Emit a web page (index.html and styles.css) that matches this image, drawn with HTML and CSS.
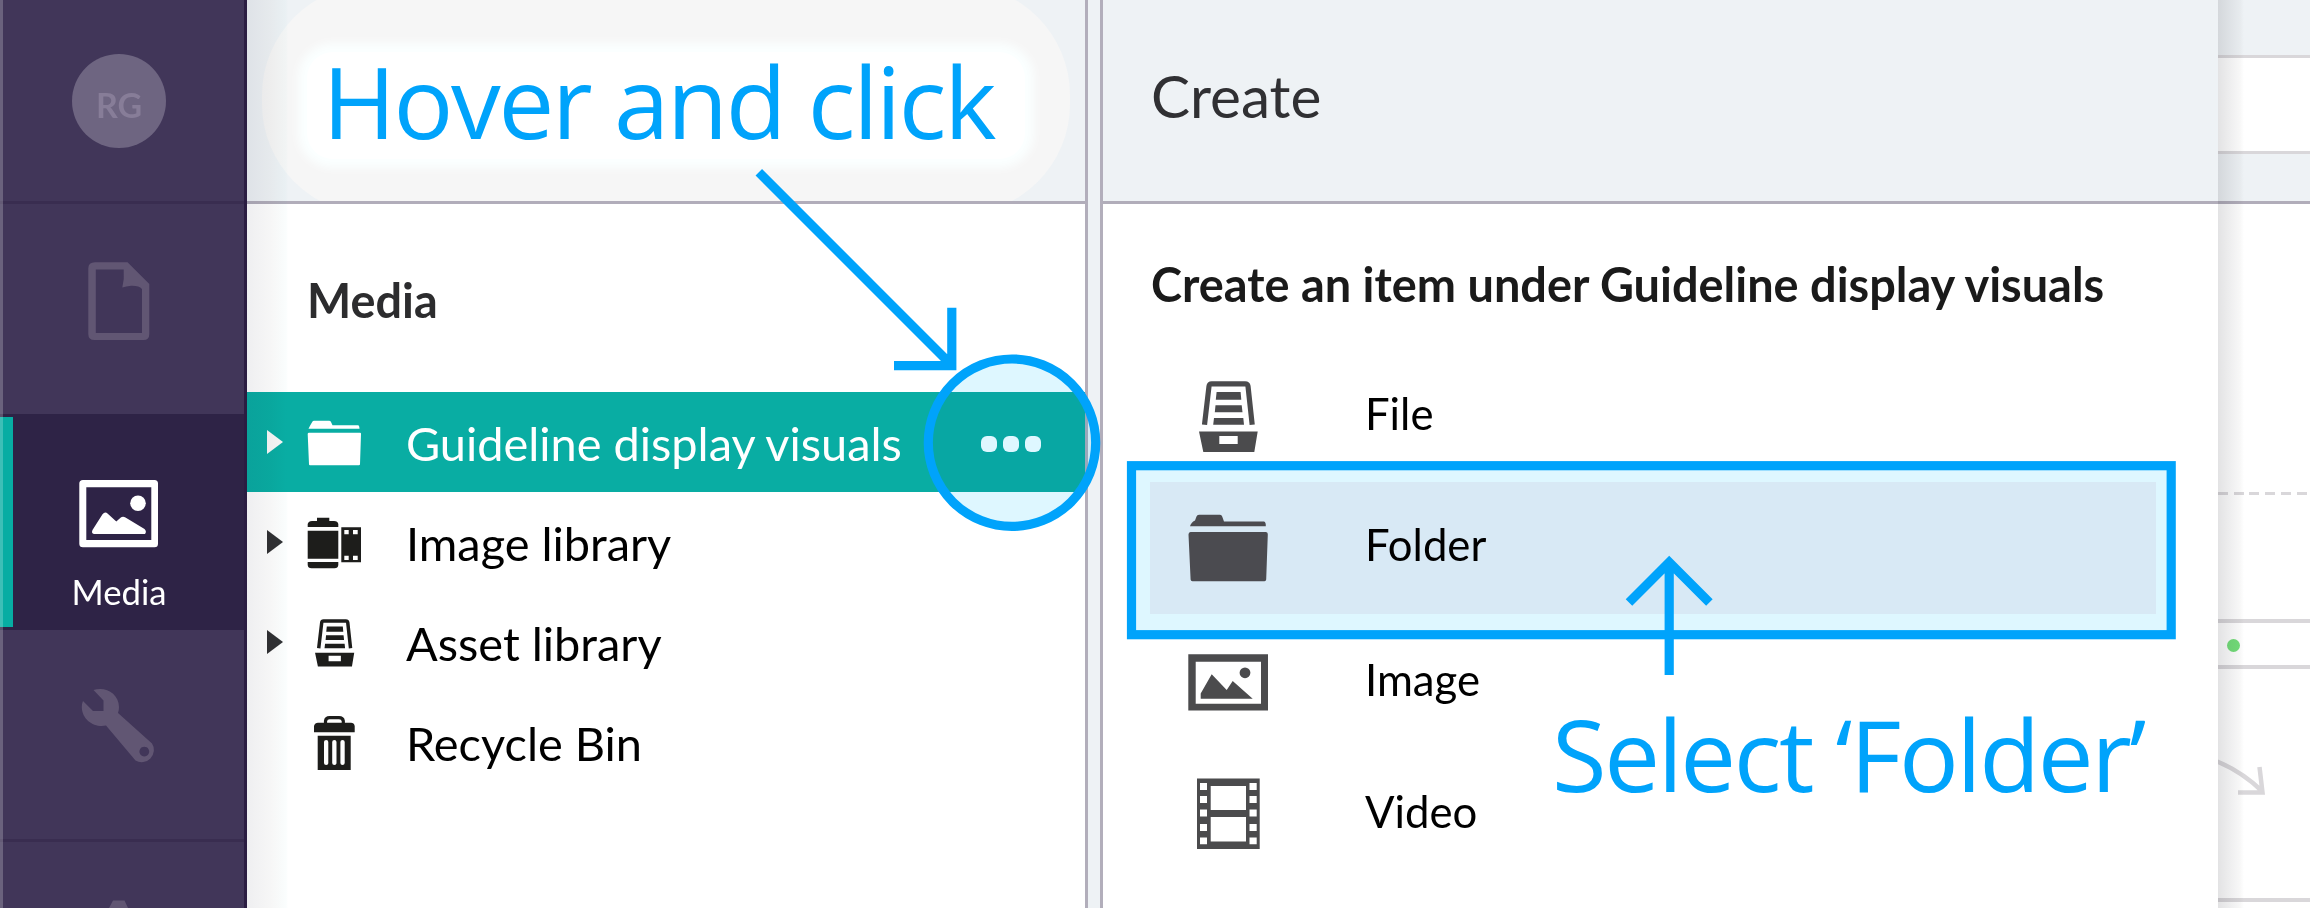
FILE: index.html
```html
<!DOCTYPE html>
<html lang="en">
<head>
<meta charset="utf-8">
<title>Media</title>
<link rel="stylesheet" href="styles.css">
</head>
<body>
<svg class="defs" width="0" height="0" aria-hidden="true">
  <symbol id="drawer" viewBox="0 0 80 80">
    <path d="M16.5 48.7 21 10.2Q21.3 7.8 23.7 7.8H57.2Q59.6 7.8 60 10.2L64.2 48.7" fill="none" stroke="currentColor" stroke-width="5.2"/>
    <path d="M28.6 16H52.6L53.3 23.8H27.8ZM27.5 29.2H53.7L54.5 36.3H26.8ZM26 42H55.3L56 48.7H25.2Z" fill="currentColor"/>
    <path fill-rule="evenodd" d="M11 55.5H69.7L66.3 76H15.3ZM31.3 60V68H49.7V60Z" fill="currentColor"/>
  </symbol>
</svg>
<div class="app">
  <nav class="sidebar">
    <div class="user"><span class="avatar">RG</span></div>
    <div class="nav-item">
      <svg class="nav-icon" viewBox="79 261 80 80"><path fill-rule="evenodd" d="M95 262.300H127.500L149.300 284V334Q149.300 340 143.500 340H94.500Q88.300 340 88.300 334V268.500Q88.300 262.300 95 262.300ZM95.800 269.500V333H142V289Q139 285.500 131 285.800Q126 286.200 122.300 287.500Q124.500 279 123.700 269.500Z"/></svg>
    </div>
    <div class="nav-item active">
      <svg class="nav-icon" viewBox="79 474 80 80"><path fill-rule="evenodd" d="M83 480H154.500Q158 480 158 483.500V543.800Q158 547.300 154.500 547.300H83Q79.300 547.300 79.300 543.800V483.500Q79.300 480 83 480ZM86.300 487.300V540H151.300V487.300Z"/><circle cx="138" cy="503.300" r="7.800"/><path d="M92.500 530 102.500 514.300Q105 511 107.800 513.700L116.300 521.500 120.500 517.800Q122.700 516 125.500 517.500L144.500 529Q147 531.500 145 534H94Q91 533.500 92.500 530Z"/></svg>
      <span class="nav-label">Media</span>
    </div>
    <div class="nav-item tools">
      <svg class="nav-icon" viewBox="79 686 80 80"><path fill-rule="evenodd" d="M93.500 690C105 686 118.800 693 119 707Q119 710.500 118 713L152 743.500A12.200 12.200 0 0 1 135.500 760.500L106 725.500C95 728 82 720.500 81.800 707Q81.800 703.500 83 701L93 711H103.500V700.500ZM144.300 746.700A4.900 4.900 0 1 0 144.310 746.700Z"/></svg>
    </div>
    <div class="nav-item last">
      <svg class="nav-icon cog" viewBox="79 899 80 80"><path d="M113 900.500H124.500L128 908V920H109V908Z"/></svg>
    </div>
  </nav>

  <section class="tree">
    <header class="tree-head"><span class="glow">Hover and click</span></header>
    <h2 class="tree-title">Media</h2>
    <ul class="tree-list">
      <li class="node selected">
        <span class="caret"></span>
        <svg class="node-icon" viewBox="0 0 56 56"><path d="M2.500 14.700Q4 11.500 6.500 7.500Q7 6.700 8 6.700H23Q24.500 6.700 25 8L26.500 11.300H52Q53.300 11.300 53.500 14.700ZM3 18.700H54Q55.200 18.700 55 20L54 50.300Q54 51.300 52.800 51.300H4Q3 51.300 3 50.300L1.700 20Q1.700 18.700 3 18.700Z"/></svg>
        <span class="name">Guideline display visuals</span>
        <span class="more"><i></i><i></i><i></i></span>
      </li>
      <li class="node">
        <span class="caret"></span>
        <svg class="node-icon" viewBox="0 0 56 56"><path fill-rule="evenodd" d="M1.700 13V10Q2.500 7 6 7H11V3.700H23.300V7H28Q31.800 7 32.300 10V13ZM1.700 16.700H32.300V44.700H1.700ZM1.700 48H32.300V51Q32 54.300 28.500 54.300H5.500Q2 54.300 1.700 51ZM35.300 13.300H55V48.300H35.300ZM38.300 16V20.300H42.700V16ZM47 16V20.300H51.700V16ZM38.300 41.700V46H42.700V41.700ZM47 41.700V46H51.700V41.700Z"/></svg>
        <span class="name">Image library</span>
      </li>
      <li class="node">
        <span class="caret"></span>
        <svg class="node-icon" viewBox="0 0 56 56"><use href="#drawer" x="1.700" y="1.800" width="53.400" height="53.400"/></svg>
        <span class="name">Asset library</span>
      </li>
      <li class="node">
        <span class="caret none"></span>
        <svg class="node-icon" viewBox="0 0 56 56"><path d="M19.500 9.500V7Q20 3.700 23.500 3.700H33Q36.800 3.700 37.300 7V9.500" fill="none" stroke="currentColor" stroke-width="3.200"/><path fill-rule="evenodd" d="M8 18.300V12Q9 8.700 12 8.700H45Q48 8.700 48.700 12V18.300ZM11.700 21.700H44.700V56H11.700ZM20.200 26Q18 26 18 28V49Q18 51 20.200 51T22.300 49V28Q22.300 26 20.200 26ZM28.400 26Q26.200 26 26.200 28V49Q26.200 51 28.400 51T30.500 49V28Q30.500 26 28.400 26ZM36.500 26Q34.400 26 34.400 28V49Q34.400 51 36.500 51T38.700 49V28Q38.700 26 36.500 26Z"/></svg>
        <span class="name">Recycle Bin</span>
      </li>
    </ul>
    <div class="edge-shade"></div>
  </section>

  <section class="panel">
    <header class="panel-head">Create</header>
    <h3 class="panel-title">Create an item under Guideline display visuals</h3>
    <ul class="types">
      <li class="type"><svg class="type-icon"><use href="#drawer"/></svg><span class="type-name">File</span></li>
      <li class="type hovered">
        <svg class="type-icon" viewBox="0 0 80 80"><path d="M2 18.200Q3 14.500 7 12.500L8.500 8.500Q9 6.800 11 6.800H32Q33.700 6.800 34.200 8.500L36 13.500H76Q78 14 77.800 18.200ZM2.500 23.900H78Q80 24 79.800 26.500L78.200 71.500Q78 73.300 76.500 73.300H4.500Q2.700 73.300 2.600 71.500L.5 26.500Q.5 24 2.500 23.900Z"/></svg>
        <span class="type-name">Folder</span>
      </li>
      <li class="type image">
        <svg class="type-icon" viewBox="0 2 80 80"><path fill-rule="evenodd" d="M.3 14.300H80V70.500H.3ZM7.700 21.700V63.700H73V21.700Z"/><path d="M12.700 58.800V53.400L23.700 34.200 38.700 50 44.700 41 64.700 58.800Z"/><circle cx="57" cy="32.800" r="5.400"/></svg>
        <span class="type-name">Image</span>
      </li>
      <li class="type">
        <svg class="type-icon" viewBox="0 2 80 80"><path fill-rule="evenodd" d="M9 6.500H71.700V77H9ZM22.700 14V38H58V14ZM22.700 45V69.500H58V45ZM12 11V18H19V11ZM12 24V31H19V24ZM12 37.400V44.600H19V37.400ZM12 52V59H19V52ZM12 65.500V72.300H19V65.500ZM61.500 11V18H68.700V11ZM61.500 24V31H68.700V24ZM61.500 37.400V44.600H68.700V37.400ZM61.500 52V59H68.700V52ZM61.500 65.500V72.300H68.700V65.500Z"/></svg>
        <span class="type-name">Video</span>
      </li>
    </ul>
  </section>

  <aside class="editor">
    <div class="editor-head"><div class="field"></div></div>
    <div class="drop"></div>
    <div class="mid"></div>
    <div class="status"><span class="dot"></span></div>
    <div class="canvas">
      <svg class="curve" viewBox="2218 755 60 45"><path d="M2216 761Q2241 771 2262 791M2259.500 767 2262.500 792.500H2238" fill="none" stroke="#d9d7da" stroke-width="4.500"/></svg>
    </div>
    <div class="panel-shadow"></div>
  </aside>
</div>

<svg class="tint" viewBox="0 0 2310 908"><circle cx="1012" cy="442.700" r="84"/><rect x="1136" y="470" width="1031" height="161"/></svg>
<svg class="marks" viewBox="0 0 2310 908">
  <circle cx="1012" cy="442.700" r="83.700"/>
  <path d="M758.800 172.300 951.500 365M951.800 307.700V365.700H894"/>
  <rect x="1131.500" y="465.700" width="1039.700" height="169"/>
  <path d="M1669.200 675V563M1629 602.500 1669.200 562.300 1709.400 602.500"/>
</svg>
<p class="callout">Select ‘Folder’</p>
</body>
</html>
```
FILE: styles.css
```css
* { box-sizing: border-box; }
body { margin: 0; width: 2310px; height: 908px; overflow: hidden; position: relative; font-family: Lato, sans-serif; color: #111; background: #fff; }
h2, h3, ul, p { margin: 0; padding: 0; list-style: none; }
.defs { position: absolute; }
.app { display: flex; height: 908px; overflow: hidden; }

.sidebar { position: relative; flex: none; width: 247px; background: #413659; border-right: 3px solid #2b1d42; color: #615673; }
.sidebar::before { content: ""; position: absolute; left: 0; top: 0; width: 3px; height: 100%; background: rgba(255,255,255,.22); z-index: 2; }
.user { height: 204px; border-bottom: 3px solid #392d50; display: flex; justify-content: center; padding: 54px 6px 0 0; }
.avatar { width: 94px; height: 94px; border-radius: 50%; background: #6e6581; color: #877d98; font-weight: 700; font-size: 34px; line-height: 101px; text-align: center; }
.nav-item { height: 210px; display: flex; flex-direction: column; align-items: center; padding: 57px 6px 0 0; }
.nav-icon { flex: none; width: 80px; height: 80px; fill: currentColor; }
.active { height: 216px; background: #2e2346; box-shadow: inset 13px 0 #07ada3; color: #fff; border: solid #2e2346; border-width: 3px 0; }
.nav-label { font-size: 34.700px; line-height: 40px; margin-top: 17.500px; }
.tools { padding-top: 56px; border-bottom: 3px solid #392d50; height: 212px; }

.tree { position: relative; flex: none; width: 841px; border-right: 3px solid #b2aebb; }
.tree-head { height: 204px; background: #eef2f5; border-bottom: 3px solid #b1adba; overflow: hidden; padding: 55px 0 0 60px; }
.glow { display: block; position: relative; isolation: isolate; width: 718px; height: 99px; border: 2px solid #f4f6f6; font: 99.500px/87px "Open Sans", sans-serif; letter-spacing: -2.300px; padding-left: 13.500px; color: #00a3fb; white-space: nowrap; }
.glow::before, .glow::after { content: ""; position: absolute; inset: -72px -47px -62px; border-radius: 110px; background: #f6f6f6; z-index: -2; }
.glow::after { inset: -5px -2px -7px; border-radius: 26px; background: #fff; box-shadow: 0 0 10px 9px #fbffff; z-index: -1; }
.tree-title { height: 188px; padding: 68px 0 0 60px; font-size: 46.800px; line-height: 56px; color: #2c2c2e; }
.node { height: 100px; display: flex; align-items: center; padding-left: 20px; color: #1d1d1b; }
.caret { width: 16px; height: 24px; background: #303033; clip-path: polygon(0 0, 100% 50%, 0 100%); }
.caret.none { visibility: hidden; }
.node-icon { flex: none; width: 56px; height: 56px; margin: 0 44px 0 23px; fill: currentColor; }
.name { font-size: 46.900px; color: #000; white-space: nowrap; padding-top: 2px; }
.selected { background: #09ada3; color: #fff; }
.selected .name { color: #fff; }
.selected .caret { background: #f8f8f8; }
.more { display: flex; gap: 6px; margin: 3px 44px 0 auto; }
.more i { width: 16px; height: 16px; border-radius: 6px; background: #fff; }
.edge-shade { position: absolute; left: 0; top: 0; width: 41px; height: 100%; background: linear-gradient(90deg, rgba(20,20,50,.07), rgba(20,20,20,.035) 60%, rgba(0,160,160,.02) 95%, transparent); }

.panel { flex: none; width: 1118px; margin-left: 12px; border-left: 3px solid #b2aebb; outline: 12px solid #eef2f5; clip-path: inset(0 0 0 -12px); background: #fff; }
.panel-head { height: 204px; background: #eef2f5; border-bottom: 3px solid #b1adba; padding: 57px 0 0 48px; font-size: 58.500px; line-height: 76px; color: #303033; }
.panel-title { height: 146px; padding: 52px 0 0 48px; font-size: 46.900px; line-height: 56px; color: #1a1a1a; white-space: nowrap; }
.types { padding: 0 62px 0 47px; }
.type { height: 132px; padding-left: 38px; display: flex; align-items: center; }
.type.image { margin-top: 2px; }
.type-icon { width: 80px; height: 80px; flex: none; color: #4b4b4d; fill: currentColor; margin-right: 97px; }
.type-name { font-size: 43.700px; color: #000; padding-bottom: 6px; }
.hovered { background: #f8f1f5; }
.hovered .type-icon { color: #564d50; }
.hovered .type-name { padding-bottom: 8px; }

.editor { position: relative; flex: 1; }
.editor-head { height: 204px; background: #eef2f5; border-bottom: 3px solid #b1adba; padding-top: 55px; }
.field { height: 99px; border: solid #d9d7da; border-width: 3px 0; background: #fff; }
.drop { height: 291px; background: repeating-linear-gradient(90deg, #d9d7da 0 10px, transparent 10px 15.700px) 0 100% / 100% 3px no-repeat; }
.mid { height: 124px; }
.status { height: 50px; border: solid #d9d7da; border-width: 4px 0; padding: 16px 0 0 8.500px; }
.dot { display: block; width: 13px; height: 13px; border-radius: 50%; background: #73de79; }
.canvas { height: 233px; padding-top: 86px; border-bottom: 4px solid #d9d7da; }
.curve { display: block; width: 60px; height: 45px; }
.panel-shadow { position: absolute; left: 0; top: 0; width: 26px; height: 100%; background: linear-gradient(90deg, rgba(30,30,40,.125), rgba(30,30,40,.07) 50%, rgba(20,20,20,.03) 85%, transparent); }

.tint, .marks { position: absolute; left: 0; top: 0; width: 2310px; height: 908px; }
.tint { mix-blend-mode: multiply; fill: #def7ff; }
.marks { fill: none; stroke: #00a3fb; stroke-width: 9.200px; }
.callout { position: absolute; left: 1552px; top: 694px; font: 99.500px/120px "Open Sans", sans-serif; letter-spacing: -2.400px; color: #00a3fb; white-space: nowrap; }
```
